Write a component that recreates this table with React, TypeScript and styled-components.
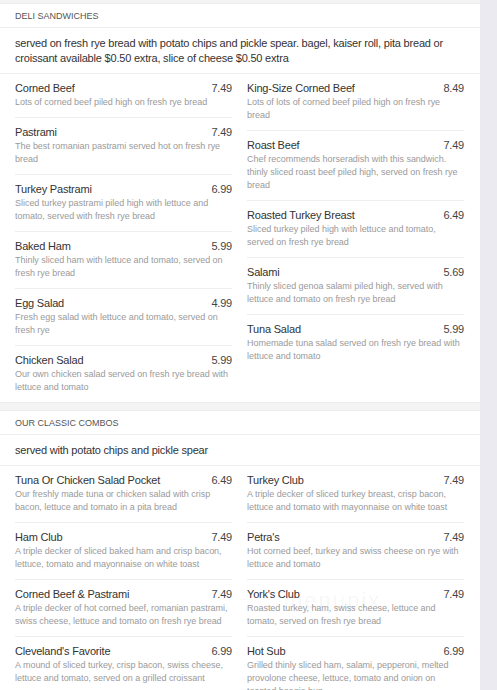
import React from 'react';
import styled, {createGlobalStyle} from 'styled-components';

type Item = {
    name: string;
    price: string;
    desc: string;
};

type Section = {
    title: string;
    intro: string;
    left: Item[];
    right: Item[];
};

const sections: Section[] = [
    {
        title: 'Deli Sandwiches',
        intro: 'served on fresh rye bread with potato chips and pickle spear. bagel, kaiser roll, pita bread or croissant available $0.50 extra, slice of cheese $0.50 extra',
        left: [
            {name: 'Corned Beef', price: '7.49', desc: 'Lots of corned beef piled high on fresh rye bread'},
            {name: 'Pastrami', price: '7.49', desc: 'The best romanian pastrami served hot on fresh rye bread'},
            {name: 'Turkey Pastrami', price: '6.99', desc: 'Sliced turkey pastrami piled high with lettuce and tomato, served with fresh rye bread'},
            {name: 'Baked Ham', price: '5.99', desc: 'Thinly sliced ham with lettuce and tomato, served on fresh rye bread'},
            {name: 'Egg Salad', price: '4.99', desc: 'Fresh egg salad with lettuce and tomato, served on fresh rye'},
            {name: 'Chicken Salad', price: '5.99', desc: 'Our own chicken salad served on fresh rye bread with lettuce and tomato'},
        ],
        right: [
            {name: 'King-Size Corned Beef', price: '8.49', desc: 'Lots of lots of corned beef piled high on fresh rye bread'},
            {name: 'Roast Beef', price: '7.49', desc: 'Chef recommends horseradish with this sandwich. thinly sliced roast beef piled high, served on fresh rye bread'},
            {name: 'Roasted Turkey Breast', price: '6.49', desc: 'Sliced turkey piled high with lettuce and tomato, served on fresh rye bread'},
            {name: 'Salami', price: '5.69', desc: 'Thinly sliced genoa salami piled high, served with lettuce and tomato on fresh rye bread'},
            {name: 'Tuna Salad', price: '5.99', desc: 'Homemade tuna salad served on fresh rye bread with lettuce and tomato'},
        ],
    },
    {
        title: 'Our Classic Combos',
        intro: 'served with potato chips and pickle spear',
        left: [
            {name: 'Tuna Or Chicken Salad Pocket', price: '6.49', desc: 'Our freshly made tuna or chicken salad with crisp bacon, lettuce and tomato in a pita bread'},
            {name: 'Ham Club', price: '7.49', desc: 'A triple decker of sliced baked ham and crisp bacon, lettuce, tomato and mayonnaise on white toast'},
            {name: 'Corned Beef & Pastrami', price: '7.49', desc: 'A triple decker of hot corned beef, romanian pastrami, swiss cheese, lettuce and tomato on fresh rye bread'},
            {name: "Cleveland's Favorite", price: '6.99', desc: 'A mound of sliced turkey, crisp bacon, swiss cheese, lettuce and tomato, served on a grilled croissant'},
        ],
        right: [
            {name: 'Turkey Club', price: '7.49', desc: 'A triple decker of sliced turkey breast, crisp bacon, lettuce and tomato with mayonnaise on white toast'},
            {name: "Petra's", price: '7.49', desc: 'Hot corned beef, turkey and swiss cheese on rye with lettuce and tomato'},
            {name: "York's Club", price: '7.49', desc: 'Roasted turkey, ham, swiss cheese, lettuce and tomato, served on fresh rye bread'},
            {name: 'Hot Sub', price: '6.99', desc: 'Grilled thinly sliced ham, salami, pepperoni, melted provolone cheese, lettuce, tomato and onion on toasted hoagie bun'},
        ],
    },
];

const GlobalStyle = createGlobalStyle`
    html, body {
        margin: 0;
        padding: 0;
        background: #ebeaf0;
        font-family: "Liberation Sans", Arial, sans-serif;
    }
`;

const MenuItem = ({item}: {item: Item}) => (
    <ItemRow>
        <ItemHead>
            <ItemName>{item.name}</ItemName>
            <ItemPrice>{item.price}</ItemPrice>
        </ItemHead>
        <ItemDesc>{item.desc}</ItemDesc>
    </ItemRow>
);

const MenuSection = ({section}: {section: Section}) => (
    <Card>
        <CardHeader>{section.title}</CardHeader>
        <Intro>{section.intro}</Intro>
        <Columns>
            <Column>
                {section.left.map((item) => <MenuItem key={item.name} item={item}/>)}
            </Column>
            <Column>
                {section.right.map((item) => <MenuItem key={item.name} item={item}/>)}
            </Column>
        </Columns>
    </Card>
);

export default function App() {
    return (
        <>
            <GlobalStyle/>
            <Page>
                {sections.map((s) => <MenuSection key={s.title} section={s}/>)}
                <Watermark>menupix</Watermark>
            </Page>
        </>
    );
}

const Page = styled.div`
    position: relative;
    width: 480px;
    height: 690px;
    overflow: hidden;
    background: #f4f4f4;
    padding-top: 3px;
    box-sizing: border-box;
    display: flex;
    flex-direction: column;
    gap: 7px;
`;

const Card = styled.section`
    background: #fff;
    border-top: 1px solid #ececec;
    border-bottom: 1px solid #ececec;
`;

const CardHeader = styled.div`
    height: 23px;
    padding: 0 15px;
    display: flex;
    align-items: center;
    font-size: 9px;
    text-transform: uppercase;
    color: #555;
    border-bottom: 1px solid #eeeeee;
`;

const Intro = styled.div`
    padding: 8px 30px 7px 15px;
    font-size: 11px;
    letter-spacing: -0.2px;
    line-height: 15px;
    color: #333;
    border-bottom: 1px solid #eeeeee;
`;

const Columns = styled.div`
    display: grid;
    grid-template-columns: 1fr 1fr;
    column-gap: 15px;
    padding: 0 16px 0 15px;
`;

const Column = styled.div`
    display: flex;
    flex-direction: column;
`;

const ItemRow = styled.div`
    padding: 7px 0 8px;
    border-bottom: 1px solid #eeeeee;

    &:last-child {
        border-bottom: none;
    }
`;

const ItemHead = styled.div`
    display: flex;
    justify-content: space-between;
    align-items: baseline;
    font-size: 11px;
    letter-spacing: -0.2px;
    line-height: 15px;
    color: #333;
`;

const ItemName = styled.span``;

const ItemPrice = styled.span`
    color: #444;
`;

const ItemDesc = styled.div`
    font-size: 9px;
    letter-spacing: -0.03px;
    line-height: 13px;
    color: #9a9a9a;
`;

const Watermark = styled.div`
    position: absolute;
    left: 284px;
    top: 588px;
    font-size: 22px;
    letter-spacing: 2px;
    color: rgba(0, 0, 0, 0.05);
    pointer-events: none;
`;
